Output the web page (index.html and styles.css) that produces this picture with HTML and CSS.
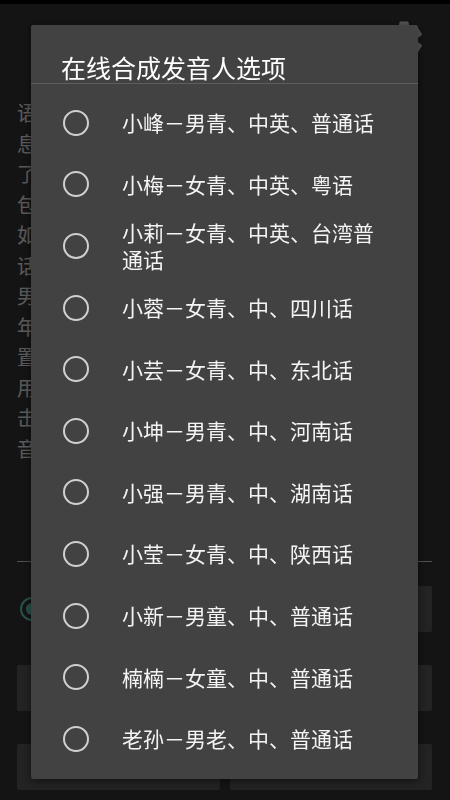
FILE: index.html
```html
<!DOCTYPE html>
<html lang="zh-CN">
<head>
  <meta charset="UTF-8">
  <meta name="viewport" content="width=device-width, initial-scale=1.0">
  <title>在线合成发音人选项</title>
  <link rel="stylesheet" href="styles.css">
</head>
<body>

  <div class="status-bar"></div>

  <!-- Settings page behind the dialog -->
  <div class="app">
    <div class="app-header">
      <svg class="gear" viewBox="0 0 24 24" width="46" height="46">
        <path fill="#d4d4d4" d="M19.14 12.94c.04-.3.06-.61.06-.94 0-.32-.02-.64-.07-.94l2.03-1.58a.49.49 0 0 0 .12-.61l-1.92-3.32a.49.49 0 0 0-.59-.22l-2.39.96c-.5-.38-1.03-.7-1.62-.94l-.36-2.54a.48.48 0 0 0-.48-.41h-3.84a.48.48 0 0 0-.47.41l-.36 2.54c-.59.24-1.13.57-1.62.94l-2.39-.96a.48.48 0 0 0-.59.22L2.74 8.87a.47.47 0 0 0 .12.61l2.03 1.58c-.05.3-.09.63-.09.94s.02.64.07.94l-2.03 1.58a.49.49 0 0 0-.12.61l1.92 3.32c.12.22.37.29.59.22l2.39-.96c.5.38 1.03.7 1.62.94l.36 2.54c.05.24.24.41.48.41h3.84c.24 0 .44-.17.47-.41l.36-2.54c.59-.24 1.13-.56 1.62-.94l2.39.96c.22.08.47 0 .59-.22l1.92-3.32a.47.47 0 0 0-.12-.61l-2.01-1.58zM12 15.6A3.6 3.6 0 1 1 12 8.4a3.6 3.6 0 0 1 0 7.2z"/>
      </svg>
    </div>

    <div class="intro">
      <div class="intro-line">语音合成能将任意文字信息转化为语音输出，</div>
      <div class="intro-line">息实时朗读出来。在线合成服务为用户提供共</div>
      <div class="intro-line">了十余种不同风格的发音人可供选择，其中，</div>
      <div class="intro-line">包含普通话、粤语、四川话等多种方言和语言</div>
      <div class="intro-line">如东北话、河南话、湖南话及陕西话等方言。</div>
      <div class="intro-line">话发音人覆盖了男声、女声、童声与老年声，</div>
      <div class="intro-line">男女老少均有，音色自然，可根据场景选择，</div>
      <div class="intro-line">年龄段的发音人。用户可以在此处选择并设，</div>
      <div class="intro-line">置默认的在线合成发音人，选择后立即生效，</div>
      <div class="intro-line">用于朗读短信、通知和各类文本内容。请点，</div>
      <div class="intro-line">击下方按钮试听效果，试听需要联网播放发，</div>
      <div class="intro-line">音。</div>
    </div>

    <div class="app-divider"></div>

    <div class="controls">
      <div class="option-row">
        <span class="app-radio checked"></span>
        <span class="option-label">在线合成</span>
      </div>
      <div class="app-button">选择发音人</div>
      <div class="app-button">开始合成</div>
      <div class="app-button">暂停播放</div>
      <div class="app-button">继续播放</div>
      <div class="app-button">停止合成</div>
    </div>
  </div>

  <!-- Dim layer and dialog -->
  <div class="scrim"></div>

  <div class="dialog">
    <div class="dialog-title">在线合成发音人选项</div>
    <ul class="speaker-list">
      <li class="speaker"><span class="radio"></span><span class="speaker-name">小峰－男青、中英、普通话</span></li>
      <li class="speaker"><span class="radio"></span><span class="speaker-name">小梅－女青、中英、粤语</span></li>
      <li class="speaker"><span class="radio"></span><span class="speaker-name">小莉－女青、中英、台湾普通话</span></li>
      <li class="speaker"><span class="radio"></span><span class="speaker-name">小蓉－女青、中、四川话</span></li>
      <li class="speaker"><span class="radio"></span><span class="speaker-name">小芸－女青、中、东北话</span></li>
      <li class="speaker"><span class="radio"></span><span class="speaker-name">小坤－男青、中、河南话</span></li>
      <li class="speaker"><span class="radio"></span><span class="speaker-name">小强－男青、中、湖南话</span></li>
      <li class="speaker"><span class="radio"></span><span class="speaker-name">小莹－女青、中、陕西话</span></li>
      <li class="speaker"><span class="radio"></span><span class="speaker-name">小新－男童、中、普通话</span></li>
      <li class="speaker"><span class="radio"></span><span class="speaker-name">楠楠－女童、中、普通话</span></li>
      <li class="speaker"><span class="radio"></span><span class="speaker-name">老孙－男老、中、普通话</span></li>
    </ul>
  </div>

</body>
</html>
```

FILE: styles.css
```css
body {
  margin: 0;
  padding: 0;
  width: 450px;
  height: 800px;
  overflow: hidden;
  background-color: #333333;
  font-family: "Noto Sans CJK SC", "Noto Sans", sans-serif;
  color: #e2e2e2;
}

.status-bar {
  height: 4px;
  background-color: #000;
}

/* Page under the dialog */
.app {
  padding: 0 18px 0 17px;
}

.app-header {
  height: 72px;
  display: flex;
  align-items: center;
  justify-content: flex-end;
  margin-right: 5px;
}

.intro {
  margin-top: 22px;
  font-size: 20px;
  line-height: 30.5px;
}

.intro-line {
  white-space: nowrap;
  overflow: hidden;
}

.app-divider {
  height: 1px;
  background-color: #c8c8c8;
  margin-top: 97px;
}

.controls {
  display: grid;
  grid-template-columns: 1fr 1fr;
  column-gap: 10px;
  row-gap: 33px;
  margin-top: 24px;
}

.option-row {
  display: flex;
  align-items: center;
  gap: 12px;
  padding-left: 3px;
}

.app-radio {
  width: 24px;
  height: 24px;
  box-sizing: border-box;
  border-radius: 50%;
  border: 2px solid #66c8bc;
  position: relative;
}

.app-radio.checked::after {
  content: "";
  position: absolute;
  left: 4px;
  top: 4px;
  width: 12px;
  height: 12px;
  border-radius: 50%;
  background-color: #66c8bc;
}

.option-label {
  font-size: 18px;
}

.app-button {
  height: 46px;
  background-color: #575757;
  border-radius: 2px;
  display: flex;
  align-items: center;
  justify-content: center;
  font-size: 18px;
}

/* Overlay */
.scrim {
  position: fixed;
  inset: 0;
  background-color: rgba(0, 0, 0, 0.6);
}

.dialog {
  position: fixed;
  left: 31px;
  top: 25px;
  width: 387px;
  height: 754px;
  background-color: #424242;
  border-radius: 2px;
  box-shadow: 0 2px 8px rgba(0, 0, 0, 0.5);
  color: #f4f4f4;
}

.dialog-title {
  padding: 27px 30px 1px 30px;
  font-size: 25px;
  line-height: 30px;
  color: #fff;
  border-bottom: 1px solid #5e5e5e;
}

.speaker-list {
  list-style: none;
  margin: 0;
  padding: 8px 0 9px 0;
}

.speaker {
  min-height: 61.6px;
  display: flex;
  align-items: center;
  padding-left: 32px;
}

.radio {
  flex: none;
  width: 26px;
  height: 26px;
  box-sizing: border-box;
  border: 2px solid #d0d0d0;
  border-radius: 50%;
}

.speaker-name {
  margin-left: 33px;
  width: 262px;
  font-size: 21px;
  line-height: 27px;
}
```
